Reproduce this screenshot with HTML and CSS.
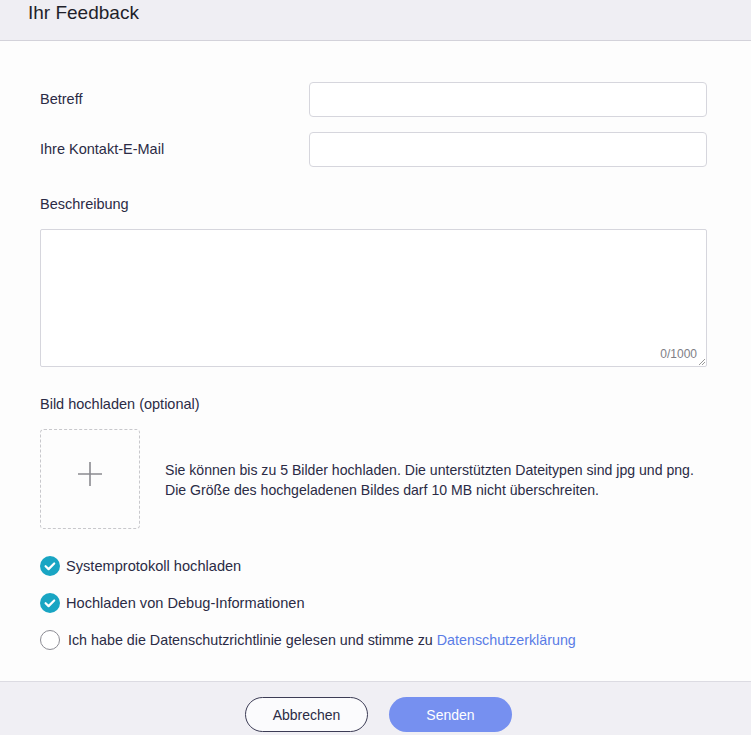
FILE: index.html
```html
<!DOCTYPE html>
<html lang="de">
<head>
    <meta charset="UTF-8">
    <meta name="viewport" content="width=device-width, initial-scale=1.0">
    <title>Ihr Feedback</title>
    <link rel="stylesheet" href="styles.css">
</head>
<body>
    <header class="kopf">
        <h1 class="titel">Ihr Feedback</h1>
    </header>

    <main class="inhalt">
        <div class="zeile">
            <label class="beschriftung" for="betreff">Betreff</label>
            <input class="eingabe" id="betreff" type="text">
        </div>
        <div class="zeile">
            <label class="beschriftung" for="email">Ihre Kontakt-E-Mail</label>
            <input class="eingabe" id="email" type="email">
        </div>

        <label class="beschriftung abschnitt" for="beschreibung">Beschreibung</label>
        <div class="textfeld">
            <textarea id="beschreibung" class="bereich"></textarea>
            <span class="zaehler">0/1000</span>
        </div>

        <div class="beschriftung abschnitt">Bild hochladen (optional)</div>
        <div class="upload">
            <div class="upload-box">
                <svg width="26" height="26" viewBox="0 0 26 26">
                    <path d="M13 1v24M1 13h24" stroke="#8a8a90" stroke-width="1.6" fill="none"/>
                </svg>
            </div>
            <p class="upload-text">Sie können bis zu 5 Bilder hochladen. Die unterstützten Dateitypen sind jpg und png.<br>Die Größe des hochgeladenen Bildes darf 10 MB nicht überschreiten.</p>
        </div>

        <ul class="optionen">
            <li class="option">
                <span class="haken an">
                    <svg width="20" height="20" viewBox="0 0 20 20"><path d="M5.6 10.2l3 2.9 5.6-5.6" stroke="#fff" stroke-width="2.2" fill="none" stroke-linecap="round" stroke-linejoin="round"/></svg>
                </span>
                Systemprotokoll hochladen
            </li>
            <li class="option">
                <span class="haken an">
                    <svg width="20" height="20" viewBox="0 0 20 20"><path d="M5.6 10.2l3 2.9 5.6-5.6" stroke="#fff" stroke-width="2.2" fill="none" stroke-linecap="round" stroke-linejoin="round"/></svg>
                </span>
                Hochladen von Debug-Informationen
            </li>
            <li class="option">
                <span class="haken aus"></span>
                <span class="kurz">Ich habe die Datenschutzrichtlinie gelesen und stimme zu&nbsp;<a class="link" href="#">Datenschutzerklärung</a></span>
            </li>
        </ul>
    </main>

    <footer class="fuss">
        <button class="knopf abbrechen">Abbrechen</button>
        <button class="knopf senden">Senden</button>
    </footer>
</body>
</html>
```

FILE: styles.css
```css
body {
  font-family: "Liberation Sans", Arial, sans-serif;
  margin: 0;
  padding: 0;
  background-color: #fdfdfd;
  color: #2b2b45;
}

.kopf {
  background-color: #efeef3;
  height: 40px;
  border-bottom: 1px solid #d3d2da;
}
.titel {
  margin: 0;
  padding-left: 28px;
  font-size: 19px;
  font-weight: normal;
  line-height: 26px;
  color: #1f1f2a;
}

.inhalt {
  padding: 41px 44px 0 40px;
}

.zeile {
  display: grid;
  grid-template-columns: 269px 1fr;
  align-items: center;
  height: 35px;
  margin-bottom: 15px;
}
.beschriftung {
  font-size: 14.5px;
  line-height: 17px;
  display: block;
}
.abschnitt {
  margin-top: 29px;
  margin-bottom: 16px;
}
.eingabe {
  height: 35px;
  box-sizing: border-box;
  border: 1px solid #d6d6dd;
  border-radius: 4px;
  background: #fff;
  margin: 0;
  font: inherit;
}

.textfeld {
  position: relative;
  height: 138px;
}
.bereich {
  display: block;
  width: 100%;
  height: 138px;
  box-sizing: border-box;
  border: 1px solid #d6d6dd;
  border-radius: 2px;
  background: #fff;
  margin: 0;
  resize: none;
}
.zaehler {
  position: absolute;
  right: 10px;
  bottom: 6px;
  font-size: 12px;
  color: #7e7e86;
}
.textfeld::after {
  content: "";
  position: absolute;
  right: 2px;
  bottom: 2px;
  width: 6px;
  height: 6px;
  background: linear-gradient(135deg, transparent 45%, #999 45%, #999 55%, transparent 55%, transparent 70%, #999 70%, #999 80%, transparent 80%);
}

.upload {
  display: flex;
  align-items: center;
}
.upload-box {
  width: 100px;
  height: 100px;
  box-sizing: border-box;
  border: 1px dashed #c8c8cc;
  border-radius: 4px;
  padding-bottom: 10px;
  display: flex;
  align-items: center;
  justify-content: center;
  flex-shrink: 0;
}
.upload-text {
  margin: 2px 0 0 25px;
  font-size: 14.1px;
  line-height: 20px;
}

.optionen {
  list-style-type: none;
  margin: 27px 0 0 0;
  padding: 0;
  display: flex;
  flex-direction: column;
  gap: 17px;
}
.option {
  display: flex;
  align-items: center;
  height: 20px;
  font-size: 14.6px;
}
.kurz {
  font-size: 14.3px;
}
.haken {
  width: 20px;
  height: 20px;
  border-radius: 50%;
  box-sizing: border-box;
  margin-right: 6px;
  flex-shrink: 0;
  display: flex;
}
.an {
  background-color: #19a5c3;
}
.aus {
  border: 1px solid #8c8c94;
  background: #fff;
  margin-right: 8px;
}
.link {
  color: #5a7ce6;
  text-decoration: none;
}

.fuss {
  margin-top: 31px;
  background-color: #f0eff4;
  border-top: 1px solid #dcdbe2;
  padding: 15px 0 20px 6px;
  display: flex;
  justify-content: center;
  gap: 21px;
}
.knopf {
  width: 123px;
  height: 35px;
  border-radius: 18px;
  font-family: "Liberation Sans", Arial, sans-serif;
  font-size: 14px;
}
.abbrechen {
  background: #fbfbfd;
  border: 1px solid #3c3c55;
  color: #2b2b45;
}
.senden {
  background-color: #7690f0;
  border: none;
  color: #fff;
}
```
